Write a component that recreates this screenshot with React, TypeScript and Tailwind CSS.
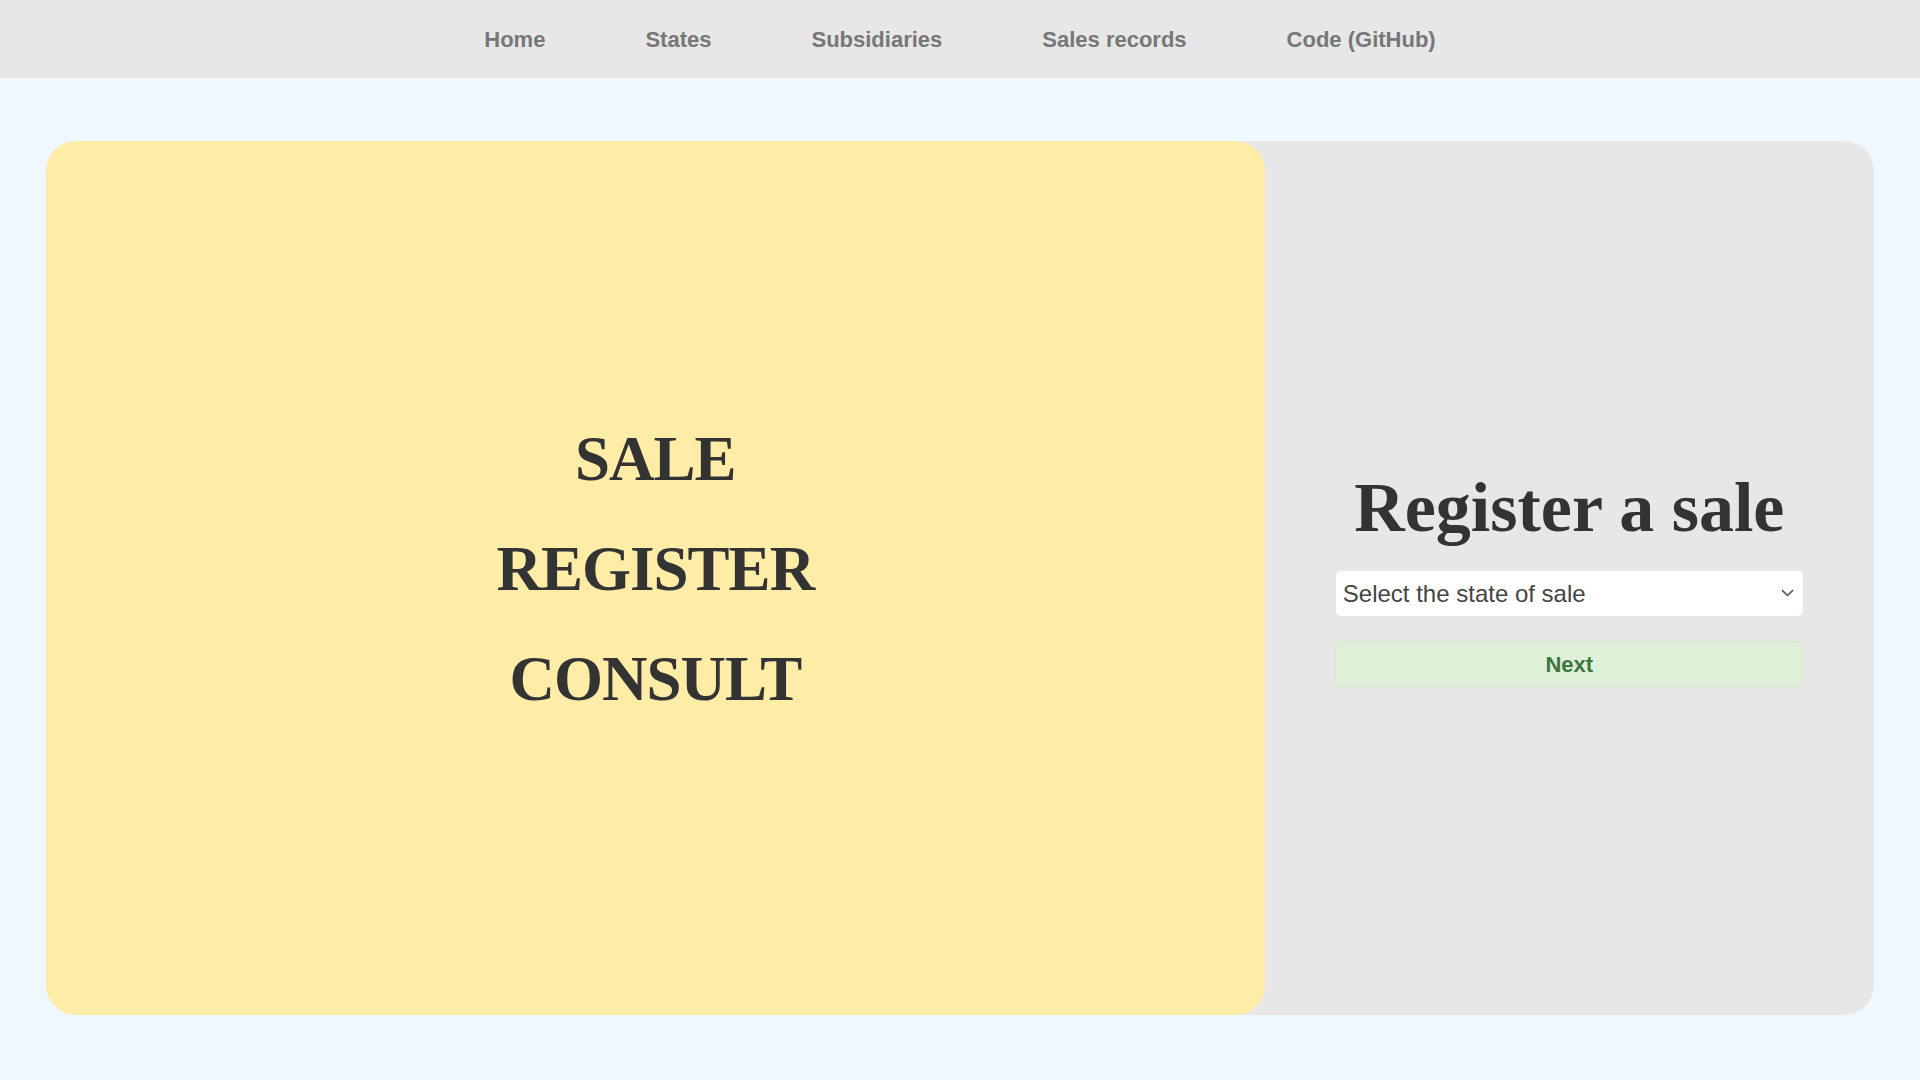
import React from "react";

const serif = { fontFamily: '"Liberation Serif", "Times New Roman", serif' };
const sans = { fontFamily: '"Liberation Sans", Arial, sans-serif' };

export default function App() {
  const links = ["Home", "States", "Subsidiaries", "Sales records", "Code (GitHub)"];
  return (
    <div className="min-h-screen w-full bg-[#f0f8ff]" style={sans}>
      <nav className="h-[78px] w-full bg-[#e7e7e7] flex items-center justify-center gap-[100px]">
        {links.map((l) => (
          <a key={l} className="text-[22px] font-bold text-[#777777] cursor-pointer">
            {l}
          </a>
        ))}
      </nav>
      <div className="px-[46px] pt-[63px]">
        <div className="h-[874px] w-full rounded-[30px] bg-[#e7e7e7] flex">
          <div
            className="w-2/3 h-full rounded-[30px] bg-[#ffeda7] flex flex-col items-center justify-center pb-[18px] text-[#333333] font-bold text-[63px] leading-[110px] tracking-[-1px]"
            style={serif}
          >
            <div>SALE</div>
            <div>REGISTER</div>
            <div>CONSULT</div>
          </div>
          <div className="w-1/3 h-full flex flex-col items-center justify-center">
            <h1
              className="text-[70px] leading-[78px] font-bold text-[#333333] mb-[24px]"
              style={serif}
            >
              Register a sale
            </h1>
            <div className="relative w-[467px] h-[45px] bg-white rounded-[5px] flex items-center pl-[7px]">
              <span className="text-[24px] text-[#444444]">Select the state of sale</span>
              <svg
                className="absolute right-[9px] top-[18px]"
                width="13"
                height="8"
                viewBox="0 0 13 8"
                fill="none"
              >
                <path d="M1 1.2 L6.5 6.5 L12 1.2" stroke="#555555" strokeWidth="1.6" />
              </svg>
            </div>
            <button className="mt-[25px] w-[468px] h-[46px] rounded-[6px] bg-[#dff0d8] border border-[#d6e9c6] text-[#3c763d] font-bold text-[22px]">
              Next
            </button>
          </div>
        </div>
      </div>
    </div>
  );
}
